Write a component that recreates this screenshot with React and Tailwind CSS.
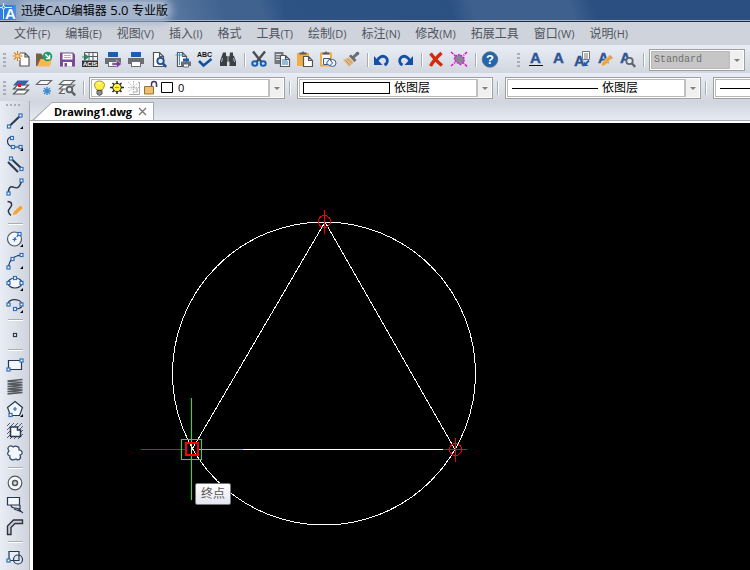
import React, { useState } from "react";
import clsx from "clsx";

const menus = [
  ["文件", "(F)"],
  ["编辑", "(E)"],
  ["视图", "(V)"],
  ["插入", "(I)"],
  ["格式", ""],
  ["工具", "(T)"],
  ["绘制", "(D)"],
  ["标注", "(N)"],
  ["修改", "(M)"],
  ["拓展工具", ""],
  ["窗口", "(W)"],
  ["说明", "(H)"],
];

/* ---------- toolbar icons, 19 x 19 ---------- */

const Page = ({ x = 0, y = 0, w = 9, h = 12 }) => (
  <path
    d={`M${x} ${y}h${w - 4}l4 4v${h - 4}h-${w}zM${x + w - 4} ${y}v4h4`}
    fill="#fff"
    stroke="#555"
    strokeWidth="1.2"
  />
);

const Printer = () => (
  <>
    <rect x="4" y="1" width="10" height="5" fill="#1a5fb0" />
    <path d="M1 7h16v6h-3v-3H4v3H1z" fill="#6b6f73" />
    <rect x="4.5" y="10.5" width="9" height="5" fill="#fff" stroke="#6b6f73" />
  </>
);

const Lens = ({ x, y, r = 3.2, color = "#1d4f91" }) => (
  <>
    <circle cx={x} cy={y} r={r} fill="#dfeaf5" stroke={color} strokeWidth="1.8" />
    <path d={`M${x + 2.3} ${y + 2.3}l3.4 3.6`} stroke={color} strokeWidth="2.4" />
  </>
);

const Letter = ({ x = 4, y = 12 }) => (
  <text x={x} y={y} fontSize="15" fontWeight="bold" fill="#2b5597" stroke="#2b5597" strokeWidth=".4">
    A
  </text>
);

const icons = {
  new: (
    <>
      <Page x={8} y={2} w={9} h={13} />
      <circle cx="5.5" cy="5" r="4.6" fill="#e8ebf2" />
      <path d="M5.5 0v10M.5 5h10M2 1.5l7 7M9 1.5l-7 7" stroke="#d28420" strokeWidth="1.2" />
      <circle cx="5.5" cy="5" r="1.5" fill="#f8d48c" />
    </>
  ),
  open: (
    <>
      <path d="M1 15V2.5h5l1.5 2H11V15z" fill="#75614a" />
      <path d="M2 15.5L5.5 8H17l-2 7.5z" fill="#f5b84b" />
      <circle cx="12.5" cy="5.5" r="4.8" fill="#279b70" />
      <path d="M10.3 3.3l4 4M14.6 4v3.6H11" fill="none" stroke="#fff" strokeWidth="1.4" />
    </>
  ),
  save: (
    <>
      <path d="M2 1.5h13l2 2v12H2z" fill="#7b4a94" />
      <path d="M4.5 2.5h10v6h-10z" fill="#fff" />
      <path d="M6 4.5h7M6 6.5h7" stroke="#b9a6c6" />
      <path d="M5 11h9v4.500H5z" fill="#fff" />
      <path d="M6.5 12H9v3.5H6.5z" fill="#7b4a94" />
    </>
  ),
  acis: (
    <>
      <path d="M3.500 9V1.5h13V9M8 1.5v8M12 1.5v8M4 5.5h12" fill="#f5f6f8" stroke="#55595d" />
      <path d="M1 6h5M4.500 3.500L7.500 6l-3 2.500z" fill="#278b62" stroke="#278b62" />
      <path d="M1 9.5h16V16H1z" fill="#333" />
      <text x="2" y="15" fontSize="6" fontWeight="bold" fill="#fff">ACIS</text>
    </>
  ),
  printTo: (
    <>
      <Printer />
      <path d="M8 11.8h4.500V9l5 4-5 4v-2.8H8z" fill="#7a3b9a" stroke="#e4e7ef" strokeWidth=".5" />
    </>
  ),
  print: <Printer />,
  preview: (
    <>
      <Page x={3.5} y={1.5} w={10} h={14} />
      <Lens x={10.5} y={10} />
    </>
  ),
  pageSetup: (
    <>
      <Page x={4.5} y={1.5} w={9} h={14} />
      <path d="M2.5 4h9M6.5 1v13" stroke="#3c9bc4" />
      <path d="M8 10.5h10V15H8z" fill="#6b6f73" />
      <path d="M10 7.5h6v3h-6z" fill="#1a5fb0" />
      <path d="M10.5 13h5v3h-5z" fill="#fff" stroke="#6b6f73" />
    </>
  ),
  spell: (
    <>
      <text x="1" y="6" fontSize="7" fontWeight="bold" fill="#111">ABC</text>
      <path d="M3 10l4.500 4.500L15.500 8" fill="none" stroke="#1550a0" strokeWidth="2.5" />
    </>
  ),
  find: (
    <>
      <path d="M4 1.5h3v3l1 1V15H1v-5l2-5.500zM11 1.5h3v3l1 .5 2 5.500V15h-6.500V5.500z" fill="#3d4043" />
      <path d="M7 5.500h4v5H7z" fill="#3d4043" />
      <path d="M3.500 7l-1 4M14.500 7l1 4M9 6v4" stroke="#b8bcc2" />
    </>
  ),
  cut: (
    <>
      <path d="M3 .5L11.500 11M15 .5L6.500 11" stroke="#4a4e52" strokeWidth="2.4" />
      <ellipse cx="4.800" cy="12.500" rx="2.5" ry="2.2" fill="none" stroke="#1a5fb0" strokeWidth="2" />
      <ellipse cx="13.200" cy="12.500" rx="2.5" ry="2.2" fill="none" stroke="#1a5fb0" strokeWidth="2" />
    </>
  ),
  copy: (
    <>
      <path d="M1.5 1h9v12h-9z" fill="#74797e" />
      <path d="M3 3.5h5M3 6h4M3 8.5h4" stroke="#dfe3ea" />
      <Page x={7.5} y={4.5} w={9} h={11} />
      <path d="M9 9h5M9 11h6M9 13h6" stroke="#2e75b6" />
    </>
  ),
  paste: (
    <>
      <path d="M1 2h12v13H1z" fill="#f0ad43" />
      <path d="M3.5 3.5v-2H6L7 0l1 1.5h2.500v2z" fill="#565a5e" />
      <Page x={7.5} y={5.5} w={9} h={10} />
    </>
  ),
  pasteSpecial: (
    <>
      <path d="M2 2.5h10v12H2z" fill="#f7f7f7" stroke="#f0ad43" strokeWidth="2" />
      <path d="M3.5 3.5v-2H6L7 0l1 1.5h2.500v2z" fill="#565a5e" />
      <path d="M4.500 7.500h7v6h-7z" fill="#edf2fa" stroke="#3d5f8f" />
      <circle cx="13.500" cy="12" r="3.5" fill="#edf2fa" stroke="#3d5f8f" />
      <path d="M7.500 12l3-4 3 4-3 3z" fill="#edf2fa" stroke="#3d5f8f" />
    </>
  ),
  brush: (
    <>
      <path d="M1 9l6-3 5 5-5 5z" fill="#e3bb85" />
      <path d="M3.500 9.500L8 14M5.500 8l4.500 4.500" stroke="#bd9564" />
      <path d="M7 5l2-1.5L14.500 9l-2 2z" fill="#6a6d71" />
      <path d="M10.500 7l5-4.500" stroke="#6a6d71" strokeWidth="3" />
      <circle cx="15.500" cy="2.5" r="1.8" fill="#6a6d71" />
    </>
  ),
  undo: (
    <>
      <path d="M4 10c2-4.500 6-6 9-3.500 2.500 2.500 1.500 6-1.500 7.500" fill="none" stroke="#1250a4" strokeWidth="2.8" />
      <path d="M1 5v9h8.500z" fill="#1250a4" />
    </>
  ),
  redo: (
    <>
      <path d="M14 10c-2-4.500-6-6-9-3.500C2.500 9 3.500 12.500 6.500 14" fill="none" stroke="#1250a4" strokeWidth="2.8" />
      <path d="M17 5v9H8.500z" fill="#1250a4" />
    </>
  ),
  erase: <path d="M3.500 2.500C7 7 11 11.500 15 14.500M14.500 2C10 6 6 10.500 3.500 15" stroke="#d42a10" strokeWidth="3.4" />,
  explode: (
    <>
      <path d="M5 5l5-1.500L14 7v4l-3.500 2.500L6 11 4.500 8z" fill="#85888e" stroke="#e012d8" strokeWidth="1.5" strokeDasharray="2 1" />
      <path d="M1 1l4 3.500M17 1l-3.500 3.500M1 15l4-3.500M17 15.500L13.500 12" stroke="#e012d8" strokeWidth="1.5" strokeDasharray="3 1" />
    </>
  ),
  help: (
    <>
      <circle cx="9" cy="8.500" r="7.800" fill="#2466ad" stroke="#60656c" strokeWidth=".7" />
      <text x="5" y="13" fontSize="13" fontWeight="bold" fill="#fff">?</text>
    </>
  ),
  textUnderline: (
    <>
      <Letter />
      <path d="M3 14.500h14" stroke="#111" />
    </>
  ),
  text: <Letter />,
  textList: (
    <>
      <Letter x={2} y={15} />
      <path d="M10.500.5h7v8h-7z" fill="#fff" stroke="#777" />
      <path d="M12 3h4M12 5h4M12 7h4" stroke="#777" />
      <path d="M17 9.500L13.500 13" stroke="#1b5fb0" strokeWidth="1.800" />
      <path d="M12 10.500V15h4.500z" fill="#1b5fb0" />
    </>
  ),
  textEdit: (
    <>
      <Letter x={3} />
      <path d="M6 15.500l1-4 7-7 3 3-7 7z" fill="#eba642" stroke="#f4f1ec" strokeWidth=".5" />
      <path d="M14.500 4.500l3 3" stroke="#e7855a" strokeWidth="1.5" />
    </>
  ),
  textFind: (
    <>
      <Letter x={2} />
      <Lens x={11.5} y={10} color="#62666b" />
    </>
  ),
  layers: (
    <>
      <path d="M1.5 15l4-4h11l-4 4zM1.5 10l4-4h11l-4 4z" fill="#fff" stroke="#555" strokeWidth="1.2" />
      <path d="M1 6.500l4.500-5H17l-4.500 5z" fill="#2c68a6" />
      <path d="M6 5h3v3H6z" fill="#e11" />
    </>
  ),
  layerFreeze: (
    <>
      <path d="M1.5 5.500l4-4h11l-4 4z" fill="#f7f8fb" stroke="#666" strokeWidth="1.2" />
      <path d="M12 8v8M8 12h8M9 9l6 6M15 9l-6 6" stroke="#3c8ccf" strokeWidth="1.4" />
    </>
  ),
  layerFind: (
    <>
      <path d="M1.5 5.500l4-4h11l-4 4zM1.5 10l4-4h11l-4 4zM5 10.500l-3.500 4H7" fill="#f7f8fb" stroke="#666" strokeWidth="1.2" />
      <Lens x={11.5} y={10.5} color="#5b5f64" r={2.8} />
    </>
  ),
};

const mainTools = [
  ["new", "新建"], ["open", "打开"], ["save", "保存"], ["acis", "ACIS 输入"], ["printTo", "输出"],
  ["print", "打印"], ["preview", "打印预览"], ["pageSetup", "页面设置"], ["spell", "拼写检查"], ["find", "查找"],
  null,
  ["cut", "剪切"], ["copy", "复制"], ["paste", "粘贴"], ["pasteSpecial", "粘贴为块"], ["brush", "格式刷"],
  null,
  ["undo", "撤销"], ["redo", "重做"],
  null,
  ["erase", "删除"], ["explode", "分解"],
  null,
  ["help", "帮助"],
];

const textTools = [
  ["textUnderline", "多行文字"], ["text", "单行文字"], ["textList", "文字样式"], ["textEdit", "编辑文字"], ["textFind", "查找文字"],
  null,
];

const layerTools = [["layers", "图层"], ["layerFreeze", "冻结图层"], ["layerFind", "图层浏览"], null];

/* ---------- drawing palette icons, 18 x 18 ---------- */

const Grip = ({ x, y }) => (
  <rect x={x - 1.5} y={y - 1.5} width="3" height="3" fill="#fff" stroke="#2f6fbd" />
);
const More = () => <path d="M17 14v3h-3z" fill="#000" stroke="none" />;

const drawTools = [
  ["直线", <><path d="M3.500 14L14.500 3.500" strokeWidth="2" /><Grip x={3} y={14.5} /><Grip x={14.5} y={3.5} /><More /></>],
  ["多段线", <><path d="M6.500 3C3 3 1.500 5 1.500 7.500S4 13 7 13h8" /><Grip x={6} y={4} /><Grip x={7} y={13} /><Grip x={14.5} y={13} /><More /></>],
  ["多线", <><path d="M5 2.500l10.500 10M2 6l10 10" strokeWidth="2" /><Grip x={5} y={2.5} /><Grip x={15.5} y={13} /></>],
  ["样条曲线", <><path d="M2.500 15.500C2 10 4.500 8 7 9s6 3 8.500-6" strokeWidth="1.5" /><Grip x={2.5} y={15.5} /><Grip x={15.5} y={2.5} /></>],
  ["徒手画", <><path d="M1.5 1.5c5 0 5 4 2.500 6.500s-2 5 1 7.500" strokeWidth="1.5" /><path d="M6 16l1.500-4.500 7-6.500 3 3-7 6.500z" fill="#eda63d" stroke="#fff" strokeWidth=".5" /></>],
  null,
  ["圆", <><circle cx="8.500" cy="9" r="7" fill="#f3f6fb" stroke="#505a6a" /><path d="M8.500 9L13 4.500" strokeDasharray="2 1" stroke="#2f6fbd" /><path d="M6.500 9.500h4M8.500 7.500v4" stroke="#2f6fbd" /><Grip x={13.5} y={4} /><More /></>],
  ["圆弧", <><path d="M2.500 15.500C3 9 7 4 15 3" /><Grip x={2.5} y={15.5} /><Grip x={6.5} y={7} /><Grip x={15.5} y={3} /><More /></>],
  ["椭圆", <><ellipse cx="9" cy="9" rx="7" ry="5" fill="#f3f6fb" /><Grip x={9} y={4} /><Grip x={2.5} y={9} /><Grip x={15.5} y={9} /><More /></>],
  ["椭圆弧", <><path d="M2 8c0-6 14-6 14 1 0 3-3 4-7 4" /><Grip x={2.5} y={8.5} /><Grip x={15.5} y={8.5} /><Grip x={9} y={13} /><More /></>],
  null,
  ["点", <rect x="7.500" y="7.500" width="3" height="3" fill="#fff" />],
  null,
  ["矩形", <><path d="M2.500 4.500h13v9h-13z" fill="#f3f6fb" /><Grip x={2.5} y={13.5} /><Grip x={15.5} y={4.5} /></>],
  ["螺旋", <path d="M1.5 3l15-1.500M1.5 3.500l15 1-15 1.500 15 1-15 1.500 15 1-15 1.500 15 1-15 1.500 15 1-15 1.500" stroke="#565a5e" strokeWidth="1.5" />],
  ["多边形", <><path d="M9 1.5l7.500 6-3 8h-9l-3-8z" fill="#f3f6fb" /><path d="M7 9h4M9 7v4" stroke="#2f6fbd" /><Grip x={4.5} y={15} /><More /></>],
  ["边界", <><path d="M1 4l3-3M1 8l7-7M1 12L12 1M1 16L16 1M4 17L17 4M8 17l9-9M12 17l5-5" strokeWidth=".8" /><path d="M4.500 5h7v3h3v6.500h-10z" fill="#f7f9fc" strokeWidth="1.5" /></>],
  ["修订云线", <path d="M3 7C0 3 5 0 7 3c3-2 7 0 6 3 4 0 4 5 1 5 2 4-2 6-4 4-4 2-7 0-6-3-3-1-3-3-1-5z" fill="#f3f6fb" stroke="#34456a" />],
  null,
  ["圆环", <><circle cx="9" cy="9" r="6.8" fill="#f8f9fb" stroke="#54585e" /><circle cx="9" cy="9" r="2.5" fill="#d5dae4" stroke="#54585e" strokeWidth="1.5" /></>],
  ["区域覆盖", <><path d="M1.5 1.5h12V9h-12z" fill="#f3f6fb" /><path d="M5 9c0 3 2 3 4 3l5 1V9M8 13l8 3M12 13l5 4" /></>],
  ["多段线宽度", <path d="M1.5 16.500V8l6-6h9v3.500H9l-4 4v7z" fill="#c9cbe8" stroke="#333" strokeWidth="1.4" />],
  null,
  ["面域", <><path d="M3 3.500h10v9H3z" fill="#e9eff8" /><circle cx="12" cy="11.500" r="4.500" fill="#dfe6f3" /><path d="M7.500 12.500H13V7" /><Grip x={2.5} y={12.5} /></>],
];

const ToolBar = ({ items }) => (
  <div className="flex items-center">
    {items.map((item, i) =>
      item === null ? (
        <span key={i} className="mr-[3px] ml-1 h-[14px] w-px bg-[#a9adb6] shadow-[1px_0_0_#fff]" />
      ) : (
        <button key={i} type="button" title={item[1]} aria-label={item[1]} className="flex h-[22px] w-[23px] shrink-0 items-center justify-center">
          <svg width="19" height="19" viewBox="0 0 19 19" fill="none" overflow="visible" fontFamily="'Liberation Sans', sans-serif">
            {icons[item[0]]}
          </svg>
        </button>
      )
    )}
  </div>
);

const Handle = () => (
  <span className="flex w-[10px] shrink-0 flex-col gap-[2px] pl-[3px]">
    {[0, 1, 2, 3].map((n) => (
      <span key={n} className="h-[2px] w-[3px] bg-[#a9adb5]" />
    ))}
  </span>
);

const Combo = ({ label, options, className, boxClass = "w-[196px]", disabled, children }) => (
  <div className={clsx("relative h-[22px] shrink-0 border border-[#a0a0a0] bg-white p-px", boxClass)}>
    <select
      aria-label={label}
      disabled={disabled}
      className={clsx("block h-full w-full appearance-none border border-[#b8b8b8] outline-none", className)}
    >
      {options.map((o) => (
        <option key={o}>{o}</option>
      ))}
    </select>
    {children}
    <span className="pointer-events-none absolute top-px right-px bottom-px flex w-[15px] items-center justify-center border-l-2 border-[#c0c0c0] bg-[#f0f0f0]">
      <span className="border-x-[3px] border-t-[3px] border-x-transparent border-t-[#808080]" />
    </span>
  </div>
);

const LayerMarks = () => (
  <svg className="pointer-events-none absolute top-px left-[3px]" width="82" height="18" viewBox="0 0 82 18" fill="none">
    <path d="M4 11C0 7 1 2 6.500 2s6.500 5 2.500 9z" fill="#ffee45" stroke="#a59330" />
    <path d="M4 11.500h5V15l-2.500 1.500L4 15z" fill="#8e8e8e" stroke="#555" />
    <path d="M5 4.500l2-.5" stroke="#fff" strokeWidth="1.5" />
    <path d="M24 2v13M17 8.500h14M19.500 4l9 9M28.500 4l-9 9" stroke="#222" strokeWidth="1.5" />
    <circle cx="24" cy="8.500" r="4.200" fill="#fff03a" stroke="#222" />
    <path d="M22 8.500h4" stroke="#b39a00" />
    <path d="M35 3l11 10M46 3L35 13M40.500 2v13M35 8.500h11" stroke="#b5b5b5" strokeDasharray="1.5 1" />
    <path d="M36 15.500h10.500V3M44 9v4h-4" stroke="#aaa" />
    <path d="M58.500 8V5c0-3.500 5-3.500 5 0v3" stroke="#35356f" strokeWidth="1.5" />
    <path d="M51.500 7.500h9V15h-9z" fill="#edbf75" stroke="#98712f" />
    <path d="M68.500 3.500h11v10h-11z" fill="#fff" stroke="#000" />
  </svg>
);

const Drawing = () => (
  <svg className="block h-full w-full" fill="none" stroke="#fff" shapeRendering="crispEdges">
    <circle cx="291" cy="250.500" r="151.500" />
    <path d="M159 326.500L292 99l130 227.500" />
    <path d="M210 326.500h201" />
    {/* object snap markers */}
    <g stroke="#f00">
      <circle cx="291.500" cy="98.500" r="6" />
      <path d="M291.500 87v24" />
      <circle cx="422.500" cy="326.500" r="6" />
      <path d="M410 326.500h24M422.500 315v24" />
    </g>
    {/* cursor */}
    <path d="M108 326.500h45" stroke="#f00" />
    <path d="M166 326.500h44" stroke="#0ff" />
    <path d="M158.500 275v102" stroke="#0f0" />
    <path d="M148.500 316.500h20v20h-20z" stroke="#0f0" />
    <path d="M153 320h12v12h-12z" stroke="#f00" strokeWidth="2" />
    <path d="M158.500 321v10" stroke="#ff0" />
  </svg>
);

const App = () => {
  const [tabOpen, setTabOpen] = useState(true);

  return (
    <div className="flex min-h-screen flex-col overflow-hidden bg-[#cfd3db] font-['Open_Sans','Noto_Sans_CJK_SC',sans-serif] text-xs text-[#4e535d]">
      <header className="flex h-[22px] items-center border-b border-[#1c2a3d] bg-[linear-gradient(75deg,#8ba1bf_0%,#5c7aa2_22%,#3f628f_30%,#3f628f_35%,#2d5384_38%,#2b5082_60%,#3d608e_63%,#3d608e_76%,#2b4f80_79%)] shadow-[inset_0_-1px_0_#a9b5c6]">
        <svg width="17" height="20" viewBox="0 0 17 20" overflow="visible" className="mr-1 shrink-0" fontFamily="'Liberation Sans', sans-serif">
          <path d="M0 4h16v15H0z" fill="#2f7fe0" />
          <path d="M0 6.500h12M3.500 2v16" stroke="#d9edff" />
          <circle cx="3.500" cy="6.500" r="1.5" fill="#2f7fe0" stroke="#fff" />
          <text x="5" y="18" fontSize="15" fontWeight="bold" fill="#fff">A</text>
        </svg>
        <h1 className="rounded-full bg-[#a3b4cc] text-xs leading-4 text-black shadow-[0_0_8px_4px_#a3b4cc]">
          迅捷<span className="text-[13px]">CAD</span>编辑器<span className="text-[13px]"> 5.0 </span>专业版
        </h1>
      </header>

      <nav className="flex h-[23px] items-center gap-[15px] pl-3.5 whitespace-nowrap">
        {menus.map(([name, key]) => (
          <button key={name} type="button" className="leading-4">
            {name}
            <span className="text-[11px]">{key}</span>
          </button>
        ))}
      </nav>

      <div className="flex h-7 items-center bg-linear-to-b from-[#e9edf5] to-[#d2d6df] pt-0.5">
        <Handle />
        <ToolBar items={mainTools} />
        <span className="w-3 shrink-0" />
        <Handle />
        <ToolBar items={textTools} />
        <Combo
          label="文字样式"
          options={["Standard"]}
          disabled
          boxClass="ml-0.5 w-[96px]"
          className="bg-[#c6c6c6] pl-0.5 font-['Liberation_Mono',monospace] text-[10px] text-[#707070]"
        />
      </div>

      <div className="flex h-7 items-center bg-linear-to-b from-[#e9edf5] to-[#d2d6df] pt-0.5">
        <Handle />
        <ToolBar items={layerTools} />
        <span className="w-[2px] shrink-0" />
        <Combo label="图层" options={["0"]} className="pl-[86px] text-[11px] text-black">
          <LayerMarks />
        </Combo>
        <ToolBar items={[null]} />
        <span className="w-1 shrink-0" />
        <Combo label="颜色" options={["依图层"]} className="pl-[94px] text-xs text-black">
          <span className="pointer-events-none absolute top-1 left-[5px] h-3 w-[87px] border border-black bg-white" />
        </Combo>
        <ToolBar items={[null]} />
        <span className="w-1 shrink-0" />
        <Combo label="线型" options={["依图层"]} className="pl-[94px] text-xs text-black">
          <span className="pointer-events-none absolute top-[10px] left-1.5 h-px w-[86px] bg-black" />
        </Combo>
        <ToolBar items={[null]} />
        <span className="w-1 shrink-0" />
        <Combo label="线宽" options={["依图层"]} className="pl-[94px] text-xs text-black">
          <span className="pointer-events-none absolute top-[10px] left-1.5 h-px w-[86px] bg-black" />
        </Combo>
      </div>

      <div className="flex flex-1">
        <aside className="w-[30px] shrink-0 border-r border-[#a9aeb9] bg-linear-to-r from-[#e9edf5] to-[#cfd4de]">
          <div className="flex h-[9px] gap-[2px] pt-[3px] pl-1.5">
            {[0, 1, 2, 3].map((n) => (
              <span key={n} className="h-[2px] w-[2px] bg-[#a9adb5]" />
            ))}
          </div>
          {drawTools.map((tool, i) =>
            tool === null ? (
              <div key={i} className="h-2 pt-[3px] pl-2">
                <div className="h-px w-[15px] bg-[#a9adb6] shadow-[0_1px_0_#fff]" />
              </div>
            ) : (
              <button key={i} type="button" title={tool[0]} aria-label={tool[0]} className="flex h-[22px] w-full items-center pl-1.5">
                <svg width="18" height="18" viewBox="0 0 18 18" fill="none" stroke="#29384f" strokeWidth="1.2">
                  {tool[1]}
                </svg>
              </button>
            )
          )}
        </aside>

        <main className="flex min-w-0 flex-1 flex-col">
          <div className="flex h-5 items-end border-b border-[#a5aab5] bg-linear-to-b from-[#d0d4dd] to-[#e6eaf2]">
            {tabOpen && (
              <div className="ml-0.5 h-[18px] bg-[#a5aab5] pt-px pr-px [clip-path:polygon(20px_0,100%_0,100%_100%,0_100%)]">
                <div className="flex h-full items-center bg-white pr-1 pl-[22px] [clip-path:polygon(20px_0,100%_0,100%_100%,2px_100%)]">
                  <span className="text-[11px] leading-4 font-bold text-black">Drawing1.dwg</span>
                  <button type="button" aria-label="关闭" onClick={() => setTabOpen(false)} className="ml-1 p-0.5">
                    <svg width="9" height="9" viewBox="0 0 9 9" stroke="#777" strokeWidth="1.3">
                      <path d="M1 1l7 7M8 1L1 8" />
                    </svg>
                  </button>
                </div>
              </div>
            )}
          </div>
          <div className="flex flex-1 border-t-2 border-l-[3px] border-white">
            <div className="relative flex-1 bg-black">
              <div className="absolute inset-0">
                <Drawing />
              </div>
              <div role="tooltip" className="absolute top-[360px] left-[162px] rounded-[2px] border border-[#767676] bg-linear-to-b from-white to-[#e4e5f0] px-[5px] text-xs leading-5 text-[#575757]">
                终点
              </div>
            </div>
          </div>
        </main>
      </div>
    </div>
  );
};

export default App;
